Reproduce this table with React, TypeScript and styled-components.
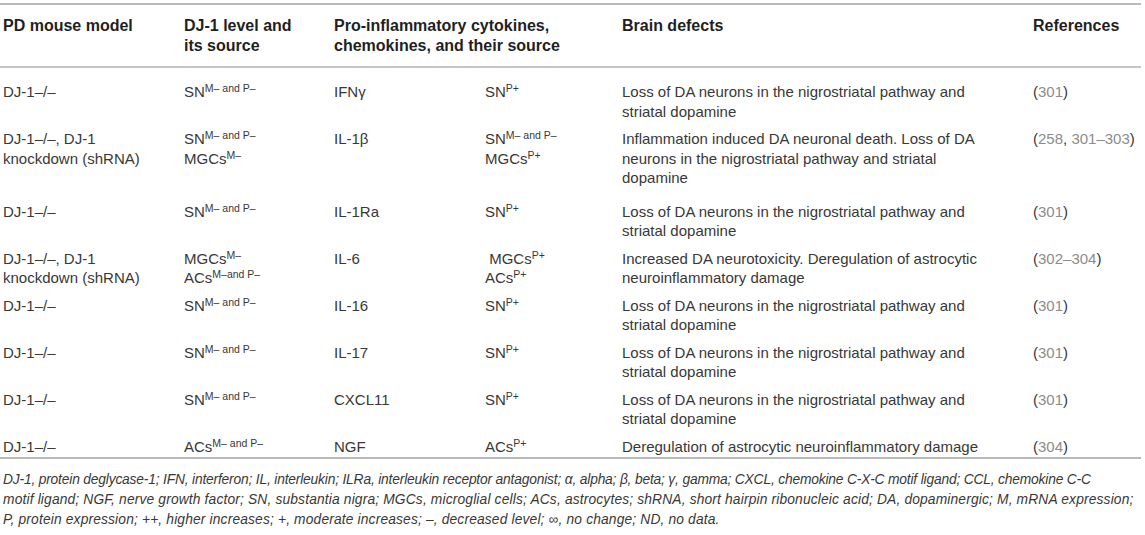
import React from "react";
import styled, { createGlobalStyle } from "styled-components";

const Global = createGlobalStyle`
  html, body { margin: 0; padding: 0; background: #ffffff; }
  body { font-family: "Liberation Sans", Arial, Helvetica, sans-serif; }
`;

const Page = styled.div`
  width: 1145px;
  padding-top: 3px;
`;

const Table = styled.table`
  width: 1141px;
  border-collapse: collapse;
  table-layout: fixed;
  border-top: 2px solid #b9b9b9;
  border-bottom: 2px solid #b9b9b9;
`;

const Col = styled.col<{ $w: number }>`
  width: ${(p) => p.$w}px;
`;

const HeadCell = styled.th`
  text-align: left;
  vertical-align: top;
  font-weight: bold;
  font-size: 16px;
  line-height: 20px;
  color: #1f1f1f;
  padding: 11px 0 10px 0;
  border-bottom: 2px solid #c6c6c6;
  &:first-child {
    padding-left: 3px;
  }
`;

const Row = styled.tr<{ $top: number; $bottom: number }>`
  & > td {
    padding-top: ${(p) => p.$top}px;
    padding-bottom: ${(p) => p.$bottom}px;
  }
`;

const Cell = styled.td<{ $nowrap?: boolean }>`
  vertical-align: top;
  font-size: 15px;
  line-height: 19.5px;
  color: #383838;
  padding-left: 0;
  padding-right: 0;
  white-space: ${(p) => (p.$nowrap ? "nowrap" : "normal")};
  &:first-child {
    padding-left: 3px;
  }
`;

const Line = styled.div`
  white-space: nowrap;
`;

const Sup = styled.sup`
  font-size: 10.5px;
  line-height: 0;
  vertical-align: 5px;
`;

const RefNum = styled.span`
  color: #8c8c8c;
`;

const Footnote = styled.div`
  padding: 11px 0 0 3px;
  font-style: italic;
  font-size: 13.8px;
  line-height: 20px;
  color: #383838;
`;

const FootLine = styled.div<{ $ls: number }>`
  white-space: nowrap;
  letter-spacing: ${(p) => p.$ls}px;
`;

type Part = { text: string; sup?: string };
type RowData = {
  model: string[];
  level: Part[][];
  cyto: string;
  source: Part[][];
  defects: string[];
  refs: (string | { n: string })[];
};

const rows: RowData[] = [
  {
    model: ["DJ-1–/–"],
    level: [[{ text: "SN", sup: "M– and P–" }]],
    cyto: "IFNγ",
    source: [[{ text: "SN", sup: "P+" }]],
    defects: ["Loss of DA neurons in the nigrostriatal pathway and", "striatal dopamine"],
    refs: ["(", { n: "301" }, ")"],
  },
  {
    model: ["DJ-1–/–, DJ-1", "knockdown (shRNA)"],
    level: [[{ text: "SN", sup: "M– and P–" }], [{ text: "MGCs", sup: "M–" }]],
    cyto: "IL-1β",
    source: [[{ text: "SN", sup: "M– and P–" }], [{ text: "MGCs", sup: "P+" }]],
    defects: [
      "Inflammation induced DA neuronal death. Loss of DA",
      "neurons in the nigrostriatal pathway and striatal",
      "dopamine",
    ],
    refs: ["(", { n: "258" }, ", ", { n: "301–303" }, ")"],
  },
  {
    model: ["DJ-1–/–"],
    level: [[{ text: "SN", sup: "M– and P–" }]],
    cyto: "IL-1Ra",
    source: [[{ text: "SN", sup: "P+" }]],
    defects: ["Loss of DA neurons in the nigrostriatal pathway and", "striatal dopamine"],
    refs: ["(", { n: "301" }, ")"],
  },
  {
    model: ["DJ-1–/–, DJ-1", "knockdown (shRNA)"],
    level: [[{ text: "MGCs", sup: "M–" }], [{ text: "ACs", sup: "M–and P–" }]],
    cyto: "IL-6",
    source: [[{ text: "\u00a0MGCs", sup: "P+" }], [{ text: "ACs", sup: "P+" }]],
    defects: [
      "Increased DA neurotoxicity. Deregulation of astrocytic",
      "neuroinflammatory damage",
    ],
    refs: ["(", { n: "302–304" }, ")"],
  },
  {
    model: ["DJ-1–/–"],
    level: [[{ text: "SN", sup: "M– and P–" }]],
    cyto: "IL-16",
    source: [[{ text: "SN", sup: "P+" }]],
    defects: ["Loss of DA neurons in the nigrostriatal pathway and", "striatal dopamine"],
    refs: ["(", { n: "301" }, ")"],
  },
  {
    model: ["DJ-1–/–"],
    level: [[{ text: "SN", sup: "M– and P–" }]],
    cyto: "IL-17",
    source: [[{ text: "SN", sup: "P+" }]],
    defects: ["Loss of DA neurons in the nigrostriatal pathway and", "striatal dopamine"],
    refs: ["(", { n: "301" }, ")"],
  },
  {
    model: ["DJ-1–/–"],
    level: [[{ text: "SN", sup: "M– and P–" }]],
    cyto: "CXCL11",
    source: [[{ text: "SN", sup: "P+" }]],
    defects: ["Loss of DA neurons in the nigrostriatal pathway and", "striatal dopamine"],
    refs: ["(", { n: "301" }, ")"],
  },
  {
    model: ["DJ-1–/–"],
    level: [[{ text: "ACs", sup: "M– and P–" }]],
    cyto: "NGF",
    source: [[{ text: "ACs", sup: "P+" }]],
    defects: ["Deregulation of astrocytic neuroinflammatory damage"],
    refs: ["(", { n: "304" }, ")"],
  },
];

const renderParts = (lines: Part[][]) =>
  lines.map((line, i) => (
    <Line key={i}>
      {line.map((p, j) => (
        <React.Fragment key={j}>
          {p.text}
          {p.sup && <Sup>{p.sup.replace(/ /g, "\u00a0")}</Sup>}
        </React.Fragment>
      ))}
    </Line>
  ));

const footLines: { text: string; ls: number }[] = [
  {
    text: "DJ-1, protein deglycase-1; IFN, interferon; IL, interleukin; ILRa, interleukin receptor antagonist; α, alpha; β, beta; γ, gamma; CXCL, chemokine C-X-C motif ligand; CCL, chemokine C-C",
    ls: -0.18,
  },
  {
    text: "motif ligand; NGF, nerve growth factor; SN, substantia nigra; MGCs, microglial cells; ACs, astrocytes; shRNA, short hairpin ribonucleic acid; DA, dopaminergic; M, mRNA expression;",
    ls: 0.15,
  },
  {
    text: "P, protein expression; ++, higher increases; +, moderate increases; –, decreased level; ∞, no change; ND, no data.",
    ls: 0.15,
  },
];

const rowPadding = (i: number) => {
  if (i === 0) return { top: 14, bottom: 4 };
  if (i === 1) return { top: 4, bottom: 10 };
  if (i === rows.length - 1) return { top: 4, bottom: 1 };
  return { top: 4, bottom: 4 };
};

export default function App() {
  return (
    <>
      <Global />
      <Page>
        <Table>
          <colgroup>
            <Col $w={184} />
            <Col $w={150} />
            <Col $w={151} />
            <Col $w={137} />
            <Col $w={411} />
            <Col $w={108} />
          </colgroup>
          <thead>
            <tr>
              <HeadCell>PD mouse model</HeadCell>
              <HeadCell>
                DJ-1 level and
                <br />
                its source
              </HeadCell>
              <HeadCell colSpan={2}>
                Pro-inflammatory cytokines,
                <br />
                chemokines, and their source
              </HeadCell>
              <HeadCell>Brain defects</HeadCell>
              <HeadCell>References</HeadCell>
            </tr>
          </thead>
          <tbody>
            {rows.map((r, i) => {
              const pad = rowPadding(i);
              return (
                <Row key={i} $top={pad.top} $bottom={pad.bottom}>
                  <Cell>
                    {r.model.map((m, k) => (
                      <Line key={k}>{m}</Line>
                    ))}
                  </Cell>
                  <Cell>{renderParts(r.level)}</Cell>
                  <Cell>{r.cyto}</Cell>
                  <Cell>{renderParts(r.source)}</Cell>
                  <Cell>
                    {r.defects.map((d, k) => (
                      <Line key={k}>{d}</Line>
                    ))}
                  </Cell>
                  <Cell $nowrap>
                    {r.refs.map((x, k) =>
                      typeof x === "string" ? (
                        <React.Fragment key={k}>{x}</React.Fragment>
                      ) : (
                        <RefNum key={k}>{x.n}</RefNum>
                      )
                    )}
                  </Cell>
                </Row>
              );
            })}
          </tbody>
        </Table>
        <Footnote>
          {footLines.map((l, i) => (
            <FootLine key={i} $ls={l.ls}>
              {l.text}
            </FootLine>
          ))}
        </Footnote>
      </Page>
    </>
  );
}
